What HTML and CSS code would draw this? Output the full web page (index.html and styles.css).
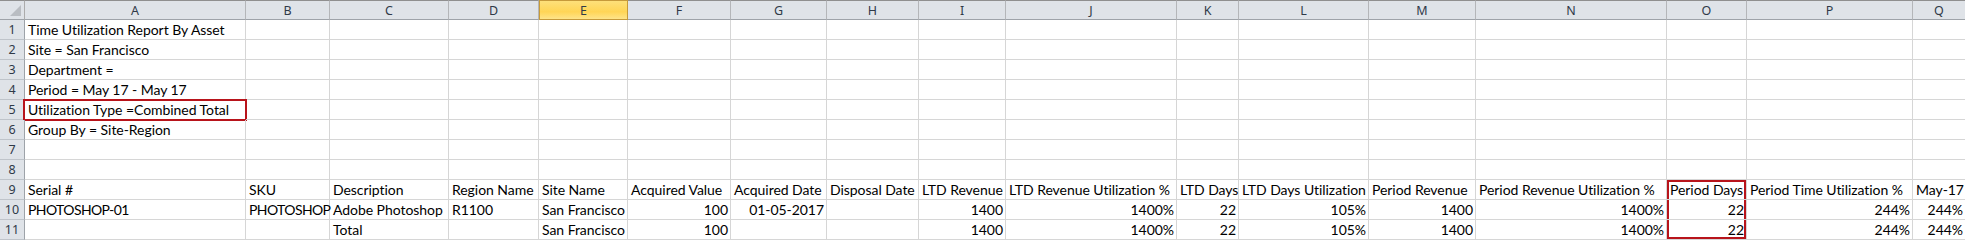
FILE: index.html
```html
<!DOCTYPE html>
<html>
<head>
<meta charset="utf-8">
<link rel="stylesheet" href="styles.css">
</head>
<body>
<div class="sheet">
  <div class="hd corner"><span class="tri"></span></div>
  <div class="hd col">A</div><div class="hd col">B</div><div class="hd col">C</div><div class="hd col">D</div>
  <div class="hd col sel">E</div><div class="hd col">F</div><div class="hd col">G</div><div class="hd col">H</div>
  <div class="hd col">I</div><div class="hd col">J</div><div class="hd col">K</div><div class="hd col">L</div>
  <div class="hd col">M</div><div class="hd col">N</div><div class="hd col">O</div><div class="hd col">P</div><div class="hd col">Q</div>

  <div class="hd rn">1</div><div class="c">Time Utilization Report By Asset</div><div class="c"></div><div class="c"></div><div class="c"></div><div class="c"></div><div class="c"></div><div class="c"></div><div class="c"></div><div class="c"></div><div class="c"></div><div class="c"></div><div class="c"></div><div class="c"></div><div class="c"></div><div class="c"></div><div class="c"></div><div class="c"></div>
  <div class="hd rn">2</div><div class="c">Site = San Francisco</div><div class="c"></div><div class="c"></div><div class="c"></div><div class="c"></div><div class="c"></div><div class="c"></div><div class="c"></div><div class="c"></div><div class="c"></div><div class="c"></div><div class="c"></div><div class="c"></div><div class="c"></div><div class="c"></div><div class="c"></div><div class="c"></div>
  <div class="hd rn">3</div><div class="c">Department =</div><div class="c"></div><div class="c"></div><div class="c"></div><div class="c"></div><div class="c"></div><div class="c"></div><div class="c"></div><div class="c"></div><div class="c"></div><div class="c"></div><div class="c"></div><div class="c"></div><div class="c"></div><div class="c"></div><div class="c"></div><div class="c"></div>
  <div class="hd rn">4</div><div class="c">Period = May 17 - May 17</div><div class="c"></div><div class="c"></div><div class="c"></div><div class="c"></div><div class="c"></div><div class="c"></div><div class="c"></div><div class="c"></div><div class="c"></div><div class="c"></div><div class="c"></div><div class="c"></div><div class="c"></div><div class="c"></div><div class="c"></div><div class="c"></div>
  <div class="hd rn">5</div><div class="c mark">Utilization Type =Combined Total</div><div class="c"></div><div class="c"></div><div class="c"></div><div class="c"></div><div class="c"></div><div class="c"></div><div class="c"></div><div class="c"></div><div class="c"></div><div class="c"></div><div class="c"></div><div class="c"></div><div class="c"></div><div class="c"></div><div class="c"></div><div class="c"></div>
  <div class="hd rn">6</div><div class="c">Group By = Site-Region</div><div class="c"></div><div class="c"></div><div class="c"></div><div class="c"></div><div class="c"></div><div class="c"></div><div class="c"></div><div class="c"></div><div class="c"></div><div class="c"></div><div class="c"></div><div class="c"></div><div class="c"></div><div class="c"></div><div class="c"></div><div class="c"></div>
  <div class="hd rn">7</div><div class="c"></div><div class="c"></div><div class="c"></div><div class="c"></div><div class="c"></div><div class="c"></div><div class="c"></div><div class="c"></div><div class="c"></div><div class="c"></div><div class="c"></div><div class="c"></div><div class="c"></div><div class="c"></div><div class="c"></div><div class="c"></div><div class="c"></div>
  <div class="hd rn">8</div><div class="c"></div><div class="c"></div><div class="c"></div><div class="c"></div><div class="c"></div><div class="c"></div><div class="c"></div><div class="c"></div><div class="c"></div><div class="c"></div><div class="c"></div><div class="c"></div><div class="c"></div><div class="c"></div><div class="c"></div><div class="c"></div><div class="c"></div>

  <div class="hd rn">9</div><div class="c">Serial #</div><div class="c">SKU</div><div class="c">Description</div><div class="c">Region Name</div><div class="c">Site Name</div><div class="c">Acquired Value</div><div class="c">Acquired Date</div><div class="c">Disposal Date</div><div class="c">LTD Revenue</div><div class="c">LTD Revenue Utilization %</div><div class="c">LTD Days</div><div class="c">LTD Days Utilization</div><div class="c">Period Revenue</div><div class="c">Period Revenue Utilization %</div><div class="c box-top">Period Days</div><div class="c">Period Time Utilization %</div><div class="c">May-17</div>

  <div class="hd rn">10</div><div class="c caps">PHOTOSHOP-01</div><div class="c caps">PHOTOSHOP</div><div class="c">Adobe Photoshop</div><div class="c">R1100</div><div class="c">San Francisco</div><div class="c num">100</div><div class="c num">01-05-2017</div><div class="c"></div><div class="c num">1400</div><div class="c num">1400%</div><div class="c num">22</div><div class="c num">105%</div><div class="c num">1400</div><div class="c num">1400%</div><div class="c num box-mid">22</div><div class="c num">244%</div><div class="c num">244%</div>

  <div class="hd rn">11</div><div class="c"></div><div class="c"></div><div class="c">Total</div><div class="c"></div><div class="c">San Francisco</div><div class="c num">100</div><div class="c"></div><div class="c"></div><div class="c num">1400</div><div class="c num">1400%</div><div class="c num">22</div><div class="c num">105%</div><div class="c num">1400</div><div class="c num">1400%</div><div class="c num box-bot">22</div><div class="c num">244%</div><div class="c num">244%</div>
</div>
</body>
</html>
```
FILE: styles.css
```css
html, body {
  margin: 0;
  padding: 0;
  background: #ffffff;
  overflow: hidden;
}
.sheet {
  display: grid;
  grid-template-columns: 25px 221px 84px 119px 90px 89px 103px 96px 92px 87px 171px 62px 130px 107px 191px 80px 166px 53px;
  grid-auto-rows: 20px;
  font-family: Lato, "Liberation Sans", sans-serif;
  font-size: 14px;
  letter-spacing: -0.05px;
  color: #000;
}
.hd {
  background: #dfe3e8;
  color: #2f3a48;
  font-family: "Noto Sans", "DejaVu Sans", sans-serif;
  font-size: 12.5px;
  letter-spacing: 0;
  box-sizing: border-box;
  border-right: 1px solid #ababab;
  border-bottom: 1px solid #9ea3a9;
  display: flex;
  align-items: center;
  justify-content: center;
}
.col {
  border-top: 1px solid #8f8f8f;
  border-bottom: 1px solid #9ea3a9;
  border-right: 1px solid #b4b6b9;
}
.corner {
  border-top: 1px solid #8f8f8f;
  position: relative;
}
.tri {
  position: absolute;
  right: 3px;
  bottom: 3px;
  width: 0;
  height: 0;
  border-left: 11px solid transparent;
  border-bottom: 11px solid #b9bdc2;
}
.sel {
  background: linear-gradient(#fde07a, #ffd556 60%, #fee48a);
  border: 1px solid #c69a3a;
}
.rn {
  border-bottom: 1px solid #bfc4ca;
  border-right: 1px solid #9ea3a9;
}
.c {
  box-sizing: border-box;
  border-right: 1px solid #d6d6d6;
  border-bottom: 1px solid #d6d6d6;
  padding: 0 3px;
  line-height: 19px;
  white-space: nowrap;
  overflow: visible;
}
.caps {
  letter-spacing: -0.6px;
}
.num {
  text-align: right;
  padding-right: 2px;
}
.mark {
  box-shadow: inset 0 0 0 2px #b8141b;
  margin: -1px -1px -1px -2px;
  padding: 1px 4px 0 5px;
  border: none;
}
.box-top {
  box-shadow: inset 2px 2px 0 #b8141b, inset -2px 0 0 #b8141b;
}
.box-mid {
  box-shadow: inset 2px 0 0 #b8141b, inset -2px 0 0 #b8141b;
}
.box-bot {
  box-shadow: inset 2px -2px 0 #b8141b, inset -2px 0 0 #b8141b;
}
```
